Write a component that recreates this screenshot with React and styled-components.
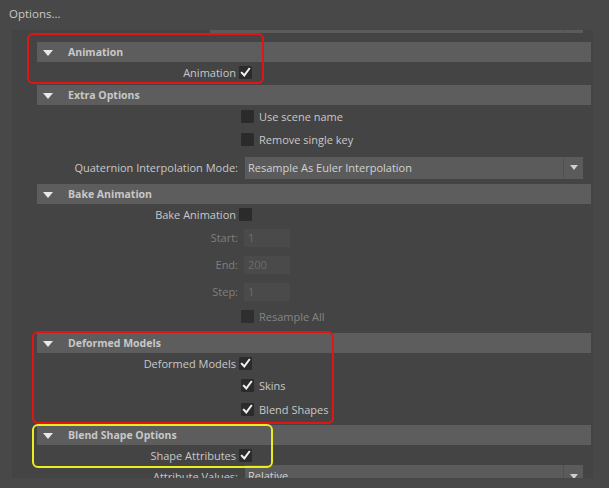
import React from "react";
import styled, { createGlobalStyle } from "styled-components";

const GlobalStyle = createGlobalStyle`
  html, body { margin: 0; padding: 0; background: #484848; }
  body { font-family: "Open Sans", "Noto Sans", sans-serif; }
  * { box-sizing: border-box; }
`;

const Window = styled.div`
  position: relative;
  width: 609px;
  height: 488px;
  background: #484848;
  overflow: hidden;
  font-family: "Open Sans", "Noto Sans", sans-serif;
`;

const TitleBar = styled.div`
  height: 30px;
  padding: 6px 0 0 9px;
  font-size: 11.5px;
  line-height: 16px;
  color: #c8c8c8;
  background: #484848;
`;

const ScrollArea = styled.div`
  margin-left: 12px;
  width: 581px;
  height: 448px;
  background: #444444;
  overflow: hidden;
`;

const ScrollContent = styled.div`
  padding: 0 2px 0 25px;
  display: flex;
  flex-direction: column;
`;

const Header = styled.div`
  height: 20px;
  background: #5d5d5d;
  display: flex;
  align-items: center;
  padding-left: 6px;
`;

const Caret = styled.span`
  width: 0;
  height: 0;
  border-left: 5.5px solid transparent;
  border-right: 5.5px solid transparent;
  border-top: 6px solid #e8e8e8;
  margin-right: 15px;
  margin-top: 1px;
`;

const HeaderTitle = styled.span`
  font-size: 10.5px;
  font-weight: 700;
  color: #c8c8c8;
  line-height: 20px;
`;

const Body = styled.div`
  display: flex;
  flex-direction: column;
  padding-bottom: ${(p) => p.$pb || 0}px;
`;

const Row = styled.div`
  height: ${(p) => p.$h}px;
  display: grid;
  grid-template-columns: 201px 1fr;
  align-items: center;
`;

const Label = styled.span`
  text-align: right;
  font-size: 11px;
  color: ${(p) => (p.$disabled ? "#7f7f7f" : "#c8c8c8")};
  padding-right: ${(p) => p.$inset || 0}px;
  white-space: nowrap;
`;

const Control = styled.div`
  display: flex;
  align-items: center;
  padding-left: ${(p) => p.$offset || 0}px;
  min-width: 0;
`;

const Box = styled.span`
  width: 13px;
  height: 13px;
  flex: none;
  background: ${(p) => (p.$disabled ? "#2f2f2f" : "#2b2b2b")};
  border-radius: 1px;
  display: inline-flex;
  align-items: center;
  justify-content: center;
`;

const SideLabel = styled.span`
  margin-left: 5px;
  font-size: 11px;
  color: ${(p) => (p.$disabled ? "#858585" : "#c8c8c8")};
  white-space: nowrap;
`;

const Field = styled.div`
  width: 46px;
  height: 18px;
  background: #4a4a4a;
  color: #6c6c6c;
  font-size: 11px;
  line-height: 18px;
  padding-left: 4px;
`;

const Dropdown = styled.div`
  flex: 1;
  height: 22px;
  background: #5b5b5b;
  display: flex;
  align-items: stretch;
  margin-right: 8px;
`;

const DropText = styled.span`
  flex: 1;
  font-size: 11px;
  color: #d2d2d2;
  line-height: 22px;
  padding-left: 3px;
  white-space: nowrap;
  overflow: hidden;
`;

const DropArrow = styled.span`
  width: 20px;
  border-left: 1px solid #505050;
  display: flex;
  align-items: center;
  justify-content: center;
  &::after {
    content: "";
    width: 0;
    height: 0;
    border-left: 4.5px solid transparent;
    border-right: 4.5px solid transparent;
    border-top: 5px solid #cfcfcf;
  }
`;

const PartialDropdown = styled(Dropdown)`
  flex: none;
  margin: -19px 8px 9px 173px;
`;

const Mark = styled.span`
  position: absolute;
  left: ${(p) => p.$x}px;
  top: ${(p) => p.$y}px;
  width: ${(p) => p.$w}px;
  height: ${(p) => p.$h}px;
  border: 2px solid ${(p) => p.$color};
  border-radius: 6px;
  pointer-events: none;
`;

const Check = () => (
  <svg width="11" height="11" viewBox="0 0 11 11">
    <path d="M1.8 5.8 L4.3 8.4 L9.2 1.8" fill="none" stroke="#f0f0f0" strokeWidth="2" strokeLinecap="square" />
  </svg>
);

const CheckBox = ({ checked, disabled }) => <Box $disabled={disabled}>{checked && <Check />}</Box>;

const Section = ({ title, children, pb }) => (
  <>
    <Header>
      <Caret />
      <HeaderTitle>{title}</HeaderTitle>
    </Header>
    <Body $pb={pb}>{children}</Body>
  </>
);

const LeftCheck = ({ label, checked, h = 20 }) => (
  <Row $h={h}>
    <Label $inset={2}>{label}</Label>
    <Control $offset={1}>
      <CheckBox checked={checked} />
    </Control>
  </Row>
);

const RightCheck = ({ label, checked, disabled, h = 23 }) => (
  <Row $h={h}>
    <span />
    <Control $offset={3}>
      <CheckBox checked={checked} disabled={disabled} />
      <SideLabel $disabled={disabled}>{label}</SideLabel>
    </Control>
  </Row>
);

const FieldRow = ({ label, value }) => (
  <Row $h={27}>
    <Label $disabled>{label}</Label>
    <Control $offset={6}>
      <Field>{value}</Field>
    </Control>
  </Row>
);

const DropRow = ({ label, value, h }) => (
  <Row $h={h}>
    <Label $inset={-3}>{label}</Label>
    <Control $offset={7}>
      <Dropdown>
        <DropText>{value}</DropText>
        <DropArrow />
      </Dropdown>
    </Control>
  </Row>
);

export default function App() {
  return (
    <>
      <GlobalStyle />
      <Window>
        <TitleBar>Options...</TitleBar>
        <ScrollArea>
          <ScrollContent>
            <PartialDropdown>
              <DropText />
              <DropArrow />
            </PartialDropdown>

            <Section title="Animation" pb={3}>
              <LeftCheck label="Animation" checked />
            </Section>

            <Section title="Extra Options">
              <RightCheck label="Use scene name" />
              <RightCheck label="Remove single key" />
              <DropRow label="Quaternion Interpolation Mode:" value="Resample As Euler Interpolation" h={33} />
            </Section>

            <Section title="Bake Animation" pb={5}>
              <LeftCheck label="Bake Animation" />
              <FieldRow label="Start:" value="1" />
              <FieldRow label="End:" value="200" />
              <FieldRow label="Step:" value="1" />
              <RightCheck label="Resample All" disabled />
            </Section>

            <Section title="Deformed Models" pb={4}>
              <LeftCheck label="Deformed Models" checked />
              <RightCheck label="Skins" checked h={24} />
              <RightCheck label="Blend Shapes" checked h={24} />
            </Section>

            <Section title="Blend Shape Options" pb={2}>
              <LeftCheck label="Shape Attributes" checked />
              <DropRow label="Attribute Values:" value="Relative" h={22} />
            </Section>
          </ScrollContent>
        </ScrollArea>

        <Mark $x={27} $y={33} $w={237} $h={51} $color="#e31414" />
        <Mark $x={32} $y={331} $w={302} $h={93} $color="#e31414" />
        <Mark $x={32} $y={424} $w={241} $h={44} $color="#ecec1e" />
      </Window>
    </>
  );
}
